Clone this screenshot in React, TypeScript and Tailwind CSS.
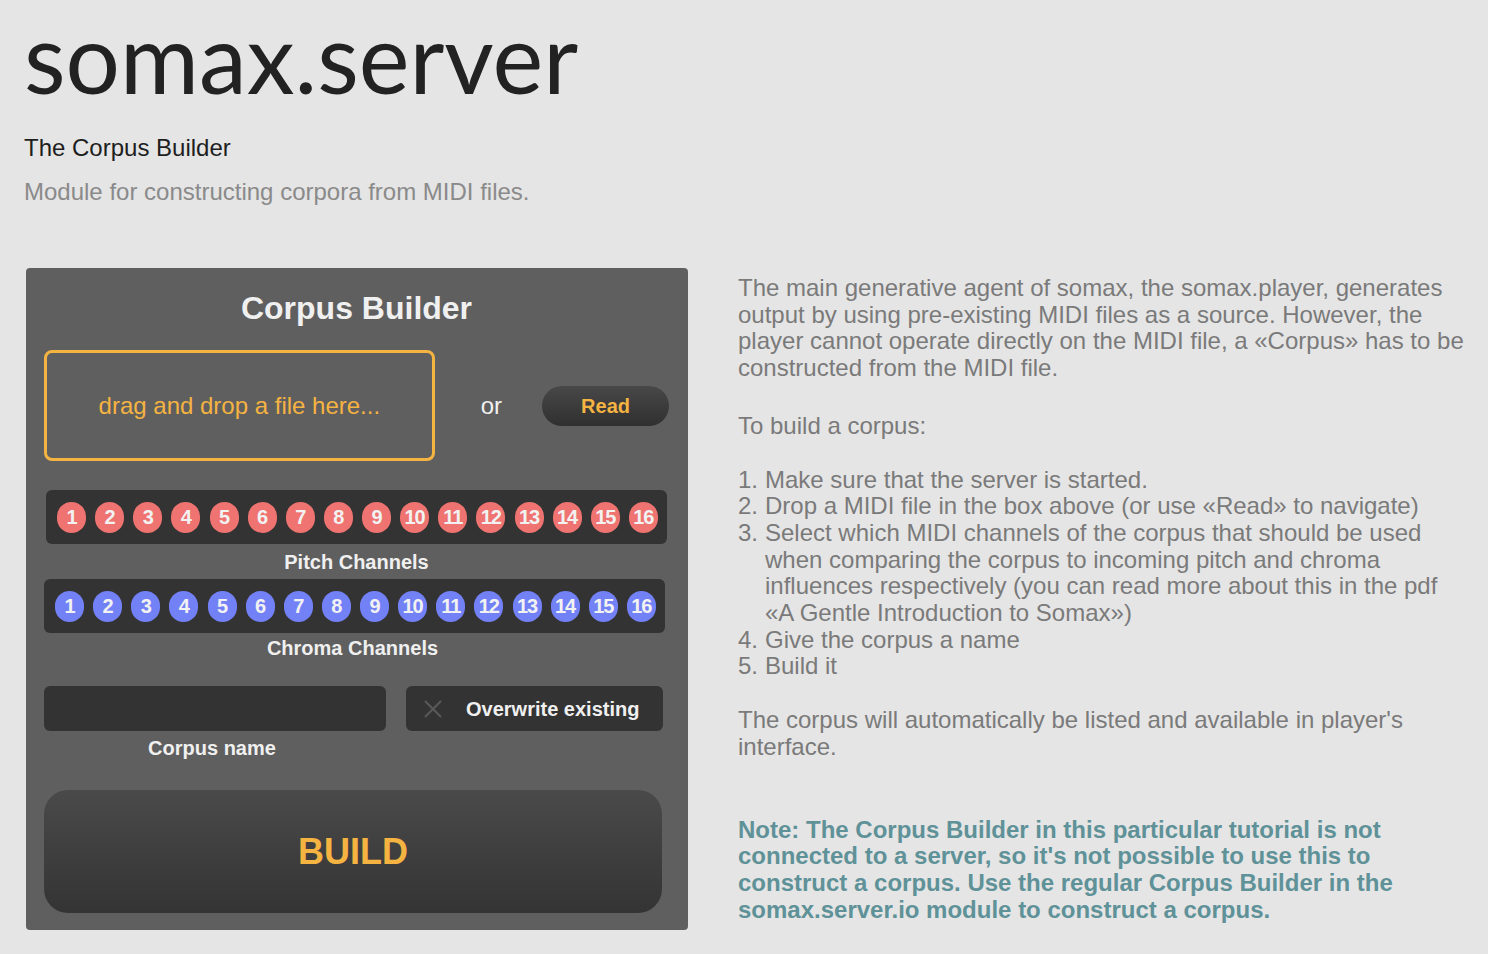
const channels = Array.from({ length: 16 }, (_, i) => i + 1);

function ChannelStrip({ color, className }: { color: string; className: string }) {
  return (
    <div className={`flex h-[54px] items-center justify-between rounded-md bg-[#333333] pl-[11px] pr-[9px] ${className}`}>
      {channels.map((n) => (
        <div
          key={n}
          className={`flex h-[31px] w-[29px] items-center justify-center rounded-full text-[20px] font-bold tracking-[-1px] text-[#f2f2f2] ${color}`}
        >
          {n}
        </div>
      ))}
    </div>
  );
}

function CorpusBuilder() {
  return (
    <div className="w-[662px] rounded-[4px] bg-[#5f5f5f] pb-[17px] pl-[18px] pr-[19px] pt-[22px] text-[#f0f0f0]">
      <h2 className="text-center text-[32px] font-bold leading-[37px]">Corpus Builder</h2>

      <div className="mt-[23px] flex items-center">
        <div className="flex h-[111px] w-[391px] items-center justify-center rounded-lg border-[3px] border-[#f5b342] text-[24px] text-[#f5b342]">
          drag and drop a file here...
        </div>
        <span className="ml-[46px] text-[24px]">or</span>
        <button className="ml-[40px] h-[40px] w-[127px] rounded-full bg-gradient-to-b from-[#484848] to-[#303030] text-[20px] font-bold text-[#f5b342]">
          Read
        </button>
      </div>

      <ChannelStrip color="bg-[#ef7370]" className="ml-[2px] mr-[2px] mt-[29px]" />
      <div className="mt-[7px] text-center text-[20px] font-bold leading-[23px]">Pitch Channels</div>
      <ChannelStrip color="bg-[#7381f7]" className="mr-[4px] mt-[5px]" />
      <div className="mr-[8px] mt-[4px] text-center text-[20px] font-bold leading-[23px]">Chroma Channels</div>

      <div className="mt-[26px] flex gap-[20px]">
        <div className="w-[342px]">
          <div className="h-[45px] rounded-md bg-[#333333]" />
          <div className="mt-[6px] pr-[6px] text-center text-[20px] font-bold leading-[23px]">Corpus name</div>
        </div>
        <div className="flex h-[45px] w-[257px] items-center rounded-md bg-[#333333]">
          <svg width="20" height="20" viewBox="0 0 20 20" className="ml-[17px]">
            <path d="M2 2 L18 18 M18 2 L2 18" stroke="#595959" strokeWidth="2" />
          </svg>
          <span className="ml-[23px] text-[20px] font-bold">Overwrite existing</span>
        </div>
      </div>

      <button className="mt-[30px] flex h-[123px] w-[618px] items-center justify-center rounded-[24px] bg-gradient-to-b from-[#4a4a4a] to-[#343434] text-[36px] font-bold text-[#f5b342]">
        BUILD
      </button>
    </div>
  );
}

export default function App() {
  return (
    <main
      className="min-h-screen bg-[#e5e5e5] pb-[24px]"
      style={{ fontFamily: '"Liberation Sans", Arial, sans-serif' }}
    >
      <header className="pl-[24px] pt-[4px]">
        <h1 className="text-[96px] leading-[106px] text-[#222222]" style={{ fontFamily: 'Lato, sans-serif' }}>
          somax.server
        </h1>
        <p className="mt-[24px] text-[24px] leading-[28px] text-[#1e1e1e]">The Corpus Builder</p>
        <p className="mt-[16px] text-[24px] leading-[28px] text-[#8a8a8a]">
          Module for constructing corpora from MIDI files.
        </p>
      </header>

      <div className="mt-[62px] flex items-start">
        <div className="ml-[26px]">
          <CorpusBuilder />
        </div>

        <div className="ml-[50px] mt-[7px] w-[730px] text-[24px] leading-[26.7px] text-[#7a7a7a]">
          <p>
            The main generative agent of somax, the somax.player, generates output by using pre-existing MIDI
            files as a source. However, the player cannot operate directly on the MIDI file, a «Corpus» has to
            be constructed from the MIDI file.
          </p>
          <p className="mt-[31px]">To build a corpus:</p>
          <ol className="mt-[27px]">
            <li className="flex"><span className="w-[27px] shrink-0">1.</span>Make sure that the server is started.</li>
            <li className="flex"><span className="w-[27px] shrink-0">2.</span>Drop a MIDI file in the box above (or use «Read» to navigate)</li>
            <li className="flex">
              <span className="w-[27px] shrink-0">3.</span>
              <span>
                Select which MIDI channels of the corpus that should be used when comparing the corpus to incoming
                pitch and chroma influences respectively (you can read more about this in the pdf «A Gentle
                Introduction to Somax»)
              </span>
            </li>
            <li className="flex"><span className="w-[27px] shrink-0">4.</span>Give the corpus a name</li>
            <li className="flex"><span className="w-[27px] shrink-0">5.</span>Build it</li>
          </ol>
          <p className="mt-[27px] pr-[60px]">
            The corpus will automatically be listed and available in player's interface.
          </p>
          <p className="mt-[56px] pr-[60px] font-bold text-[#5f9298]">
            Note: The Corpus Builder in this particular tutorial is not connected to a server, so it's not
            possible to use this to construct a corpus. Use the regular Corpus Builder in the somax.server.io
            module to construct a corpus.
          </p>
        </div>
      </div>
    </main>
  );
}
